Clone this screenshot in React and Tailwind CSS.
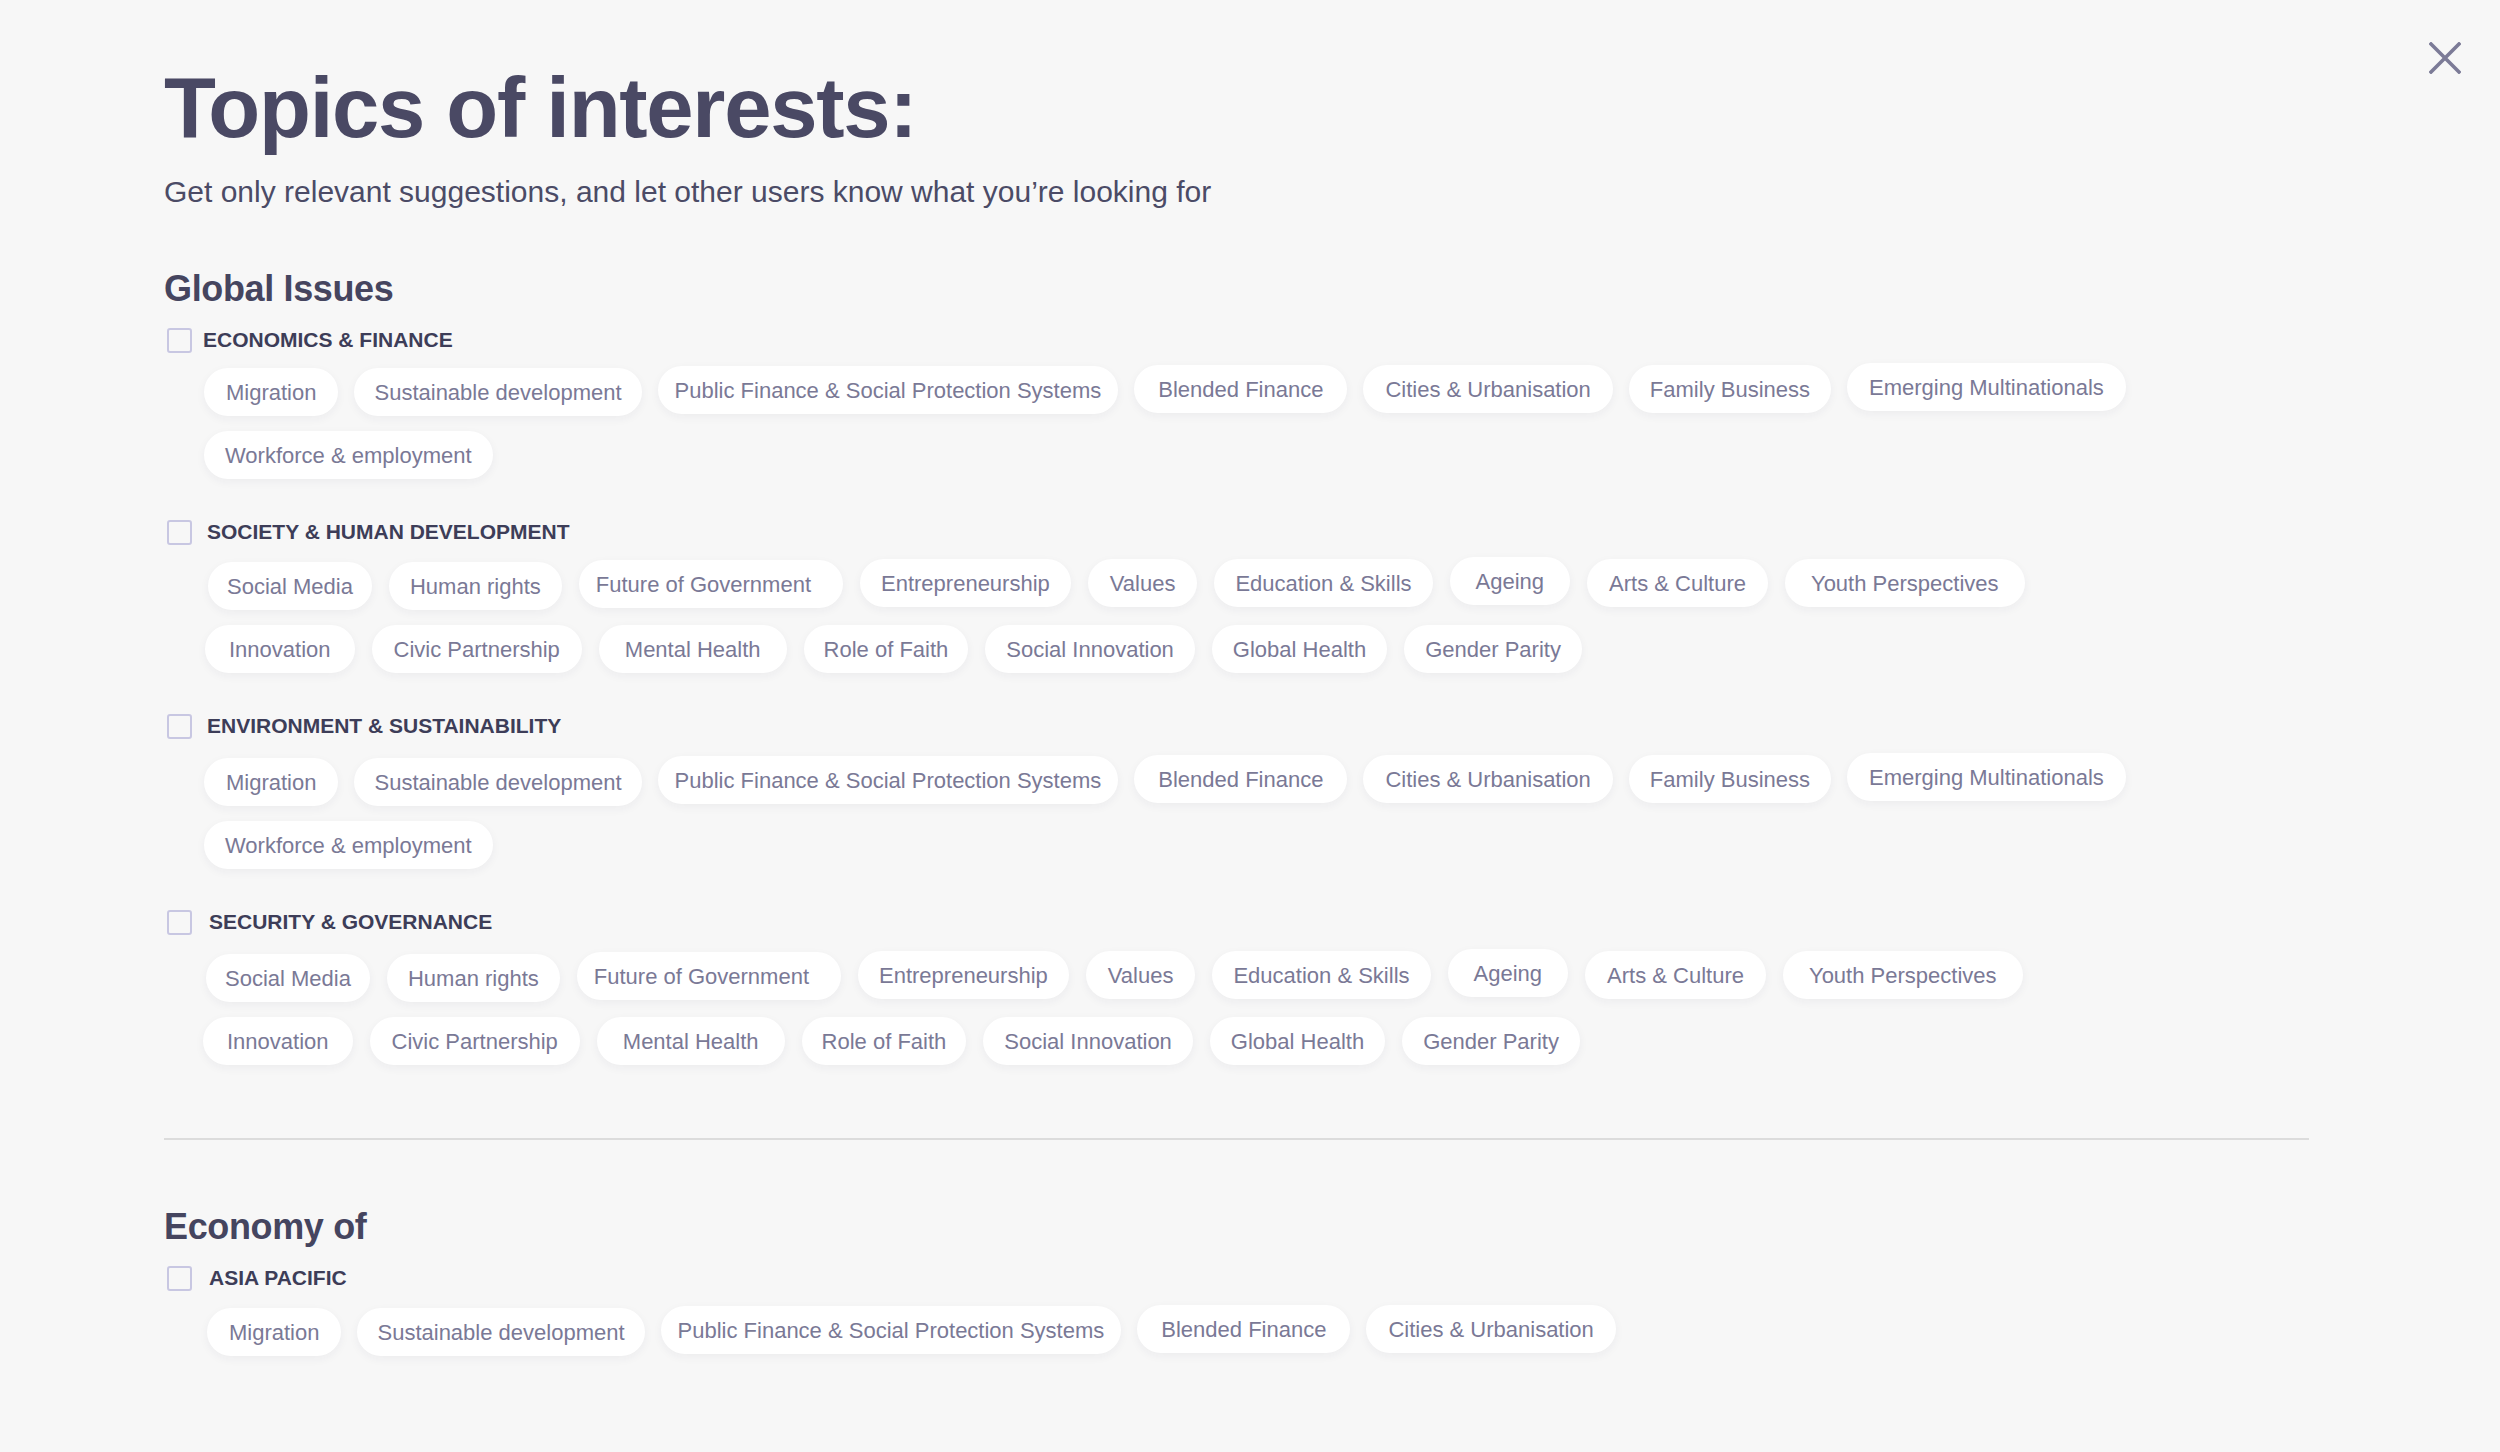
import React from "react";

const F = { fontFamily: '"Liberation Sans", Arial, sans-serif' };

const econRows = [
  [
    ["Migration", 0, "px-[22px]"],
    ["Sustainable development", 0, "px-[20px]"],
    ["Public Finance & Social Protection Systems", -2, "px-[17px]"],
    ["Blended Finance", -3, "px-[24px]"],
    ["Cities & Urbanisation", -3, "px-[22px]"],
    ["Family Business", -3, "px-[21px]"],
    ["Emerging Multinationals", -5, "px-[22px]"],
  ],
  [["Workforce & employment", 0, "px-[21px]"]],
];

const societyRows = [
  [
    ["Social Media", 0, "px-[19px]"],
    ["Human rights", 0, "px-[21px]"],
    ["Future of Government", -2, "pl-[17px] pr-[32px]"],
    ["Entrepreneurship", -3, "px-[21px]"],
    ["Values", -3, "px-[22px]"],
    ["Education & Skills", -3, "px-[21px]"],
    ["Ageing", -5, "px-[26px]"],
    ["Arts & Culture", -3, "px-[22px]"],
    ["Youth Perspectives", -3, "px-[26px]"],
  ],
  [
    ["Innovation", 0, "px-[24px]"],
    ["Civic Partnership", 0, "px-[22px]"],
    ["Mental Health", 0, "px-[26px]"],
    ["Role of Faith", 0, "px-[20px]"],
    ["Social Innovation", 0, "px-[21px]"],
    ["Global Health", 0, "px-[21px]"],
    ["Gender Parity", 0, "px-[21px]"],
  ],
];

const asiaRows = [
  [
    ["Migration", 0, "px-[22px]"],
    ["Sustainable development", 0, "px-[20px]"],
    ["Public Finance & Social Protection Systems", -2, "px-[17px]"],
    ["Blended Finance", -3, "px-[24px]"],
    ["Cities & Urbanisation", -3, "px-[22px]"],
  ],
];

function Chip({ text, dy, cls }) {
  return (
    <div
      className={`h-[48px] flex items-center rounded-full bg-white shadow-[0_3px_10px_rgba(40,40,80,0.05)] text-[22px] text-[#7a7996] whitespace-nowrap ${
        cls || "px-[21px]"
      }`}
      style={{ marginTop: dy }}
    >
      {text}
    </div>
  );
}

function Group({ label, rows, chipMl, labelGap, chipMt, rowGap, row2Ml, first }) {
  return (
    <div className={first ? "mt-[16px]" : "mt-[39px]"}>
      <div className={`h-[28px] ml-[3px] flex items-center ${labelGap}`}>
        <div className="w-[25px] h-[25px] border-2 border-[#c8c7e2] rounded-[3px]" />
        <span className="text-[21px] font-bold text-[#3d3d58] leading-[28px]">
          {label}
        </span>
      </div>
      <div className={`flex flex-col gap-[15px] ${chipMt} ${chipMl}`}>
        {rows.map((row, i) => (
          <div key={i} className={`flex items-start ${rowGap} ${i === 1 ? row2Ml || "" : ""}`}>
            {row.map(([t, dy, cls], j) => (
              <Chip key={j} text={t} dy={dy} cls={cls} />
            ))}
          </div>
        ))}
      </div>
    </div>
  );
}

export default function App() {
  return (
    <div className="relative min-h-screen w-full bg-[#f7f7f7]" style={F}>
      <button className="absolute top-[42px] right-[39px] w-[32px] h-[32px] flex items-center justify-center">
        <svg width="32" height="32" viewBox="0 0 32 32" fill="none">
          <path d="M2 2 L30 30 M30 2 L2 30" stroke="#7c7b97" strokeWidth="3.6" strokeLinecap="square" />
        </svg>
      </button>
      <div className="pl-[164px] pt-[65px] pb-[60px]">
        <h1 className="text-[85px] leading-[85px] font-bold tracking-[-0.015em] text-[#4a4964]">
          Topics of interests:
        </h1>
        <p className="mt-[24px] text-[30px] leading-[36px] text-[#4b4b66]">
          Get only relevant suggestions, and let other users know what you’re looking for
        </p>
        <h2 className="mt-[58px] text-[36px] leading-[42px] font-bold tracking-[-0.01em] text-[#45455f]">
          Global Issues
        </h2>
        <Group
          label="ECONOMICS & FINANCE"
          rows={econRows}
          chipMl="ml-[40px]"
          labelGap="gap-[11px]"
          chipMt="mt-[14px]"
          rowGap="gap-[16px]"
          first
        />
        <Group
          label="SOCIETY & HUMAN DEVELOPMENT"
          rows={societyRows}
          chipMl="ml-[44px]"
          labelGap="gap-[15px]"
          chipMt="mt-[16px]"
          rowGap="gap-[17px]"
          row2Ml="-ml-[3px]"
        />
        <Group
          label="ENVIRONMENT & SUSTAINABILITY"
          rows={econRows}
          chipMl="ml-[40px]"
          labelGap="gap-[15px]"
          chipMt="mt-[18px]"
          rowGap="gap-[16px]"
        />
        <Group
          label="SECURITY & GOVERNANCE"
          rows={societyRows}
          chipMl="ml-[42px]"
          labelGap="gap-[17px]"
          chipMt="mt-[18px]"
          rowGap="gap-[17px]"
          row2Ml="-ml-[3px]"
        />
        <div className="mt-[73px] w-[2145px] h-[2px] bg-[#dcdcdc]" />
        <h2 className="mt-[66px] text-[36px] leading-[42px] font-bold tracking-[-0.01em] text-[#45455f]">
          Economy of
        </h2>
        <Group
          label="ASIA PACIFIC"
          rows={asiaRows}
          chipMl="ml-[43px]"
          labelGap="gap-[17px]"
          chipMt="mt-[16px]"
          rowGap="gap-[16px]"
          first
        />
      </div>
    </div>
  );
}
